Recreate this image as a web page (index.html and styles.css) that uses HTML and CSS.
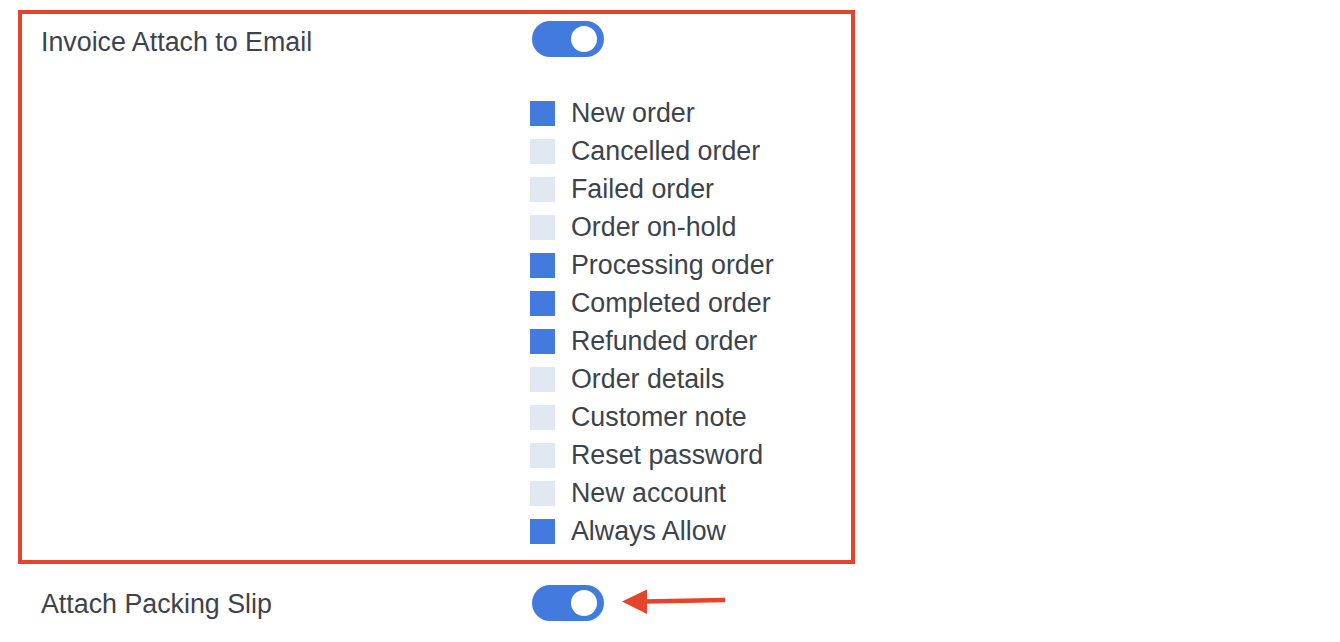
FILE: index.html
```html
<!DOCTYPE html>
<html lang="en">
<head>
    <meta charset="UTF-8">
    <meta name="viewport" content="width=device-width, initial-scale=1.0">
    <title>Email Attachments</title>
    <link rel="stylesheet" href="styles.css">
</head>
<body>
    <div class="settings">
        <div class="row highlight">
            <div class="label">Invoice Attach to Email</div>
            <div class="control">
                <span class="toggle on"><span class="knob"></span></span>
                <ul class="email-list">
                    <li><span class="check checked"></span>New order</li>
                    <li><span class="check"></span>Cancelled order</li>
                    <li><span class="check"></span>Failed order</li>
                    <li><span class="check"></span>Order on-hold</li>
                    <li><span class="check checked"></span>Processing order</li>
                    <li><span class="check checked"></span>Completed order</li>
                    <li><span class="check checked"></span>Refunded order</li>
                    <li><span class="check"></span>Order details</li>
                    <li><span class="check"></span>Customer note</li>
                    <li><span class="check"></span>Reset password</li>
                    <li><span class="check"></span>New account</li>
                    <li><span class="check checked"></span>Always Allow</li>
                </ul>
            </div>
        </div>

        <div class="row">
            <div class="label">Attach Packing Slip</div>
            <div class="control inline">
                <span class="toggle on"><span class="knob"></span></span>
                <!-- seta de destaque -->
                <svg class="arrow" width="106" height="36" viewBox="0 0 106 36">
                    <line x1="22" y1="16.5" x2="103" y2="15" stroke="#e5432b" stroke-width="4.5"/>
                    <polygon points="0,16.5 25,4.5 25,29" fill="#e5432b"/>
                </svg>
            </div>
        </div>
    </div>
</body>
</html>
```

FILE: styles.css
```css
body {
    font-family: 'Liberation Sans', Arial, sans-serif;
    background-color: #fff;
    color: #3c434a;
    margin: 0;
    padding: 0;
}

.settings {
    width: 837px;
    padding: 10px 0 0 18px;
}

.row {
    display: flex;
    padding: 19px 0 0 23px;
}

.row.highlight {
    border: 4px solid #e5432b;
    padding: 7px 19px 10px 19px;
}

.label {
    width: 489px;
    flex-shrink: 0;
    font-size: 26.8px;
    line-height: 36px;
    padding-top: 3px;
}

.control.inline {
    display: flex;
    align-items: center;
}

.toggle {
    display: block;
    position: relative;
    width: 72px;
    height: 36px;
    margin-left: 2px;
    border-radius: 18px;
    background-color: #437ade;
}

.toggle .knob {
    position: absolute;
    top: 5px;
    right: 7px;
    width: 26px;
    height: 26px;
    border-radius: 50%;
    background-color: #fff;
}

.arrow {
    display: block;
    margin-left: 18px;
}

.email-list {
    list-style: none;
    margin: 37px 0 0 0;
    padding: 0;
}

.email-list li {
    display: flex;
    align-items: center;
    height: 38px;
    font-size: 26.8px;
}

.check {
    display: inline-block;
    width: 25px;
    height: 25px;
    margin-right: 16px;
    background-color: #e2e8f2;
}

.check.checked {
    background-color: #437ade;
}
```
